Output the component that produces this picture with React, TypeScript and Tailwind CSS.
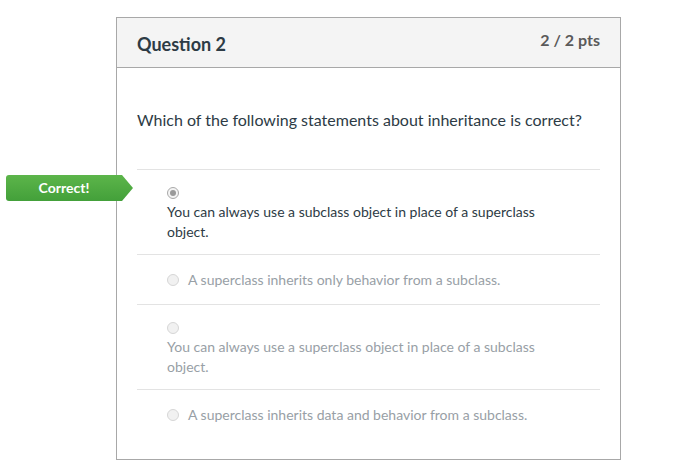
const options = [
  { text: "You can always use a subclass object in place of a superclass object.", stacked: true, selected: true },
  { text: "A superclass inherits only behavior from a subclass.", stacked: false, selected: false },
  { text: "You can always use a superclass object in place of a subclass object.", stacked: true, selected: false },
  { text: "A superclass inherits data and behavior from a subclass.", stacked: false, selected: false },
]

const Radio = ({ selected }: { selected: boolean }) => (
  <span
    className={
      selected
        ? "inline-flex h-[12px] w-[12px] shrink-0 items-center justify-center rounded-full border border-[#a9a9a9] bg-[#f4f4f4]"
        : "inline-block h-[12px] w-[12px] shrink-0 rounded-full border border-[#d6d6d6] bg-[#f1f1f1]"
    }
  >
    {selected && <span className="h-[6px] w-[6px] rounded-full bg-[#9a9a9a]" />}
  </span>
)

export default function App() {
  return (
    <div className="min-h-[474px] bg-white pl-[116px] pt-[17px] font-['Lato','Open_Sans',sans-serif]">
      <div className="w-[505px] border border-[#a8a8a8] bg-white">
        <div className="flex h-[50px] items-start justify-between border-b border-[#a8a8a8] bg-[#f4f4f4] px-[20px]">
          <h2 className="pt-[13px] text-[18px] font-bold leading-[26px] text-[#2d3b45]">Question 2</h2>
          <span className="pt-[10px] text-[16px] font-bold leading-[24px] text-[#5a5a5a]">2 / 2 pts</span>
        </div>
        <div className="px-[20px] pb-[20px]">
          <p className="pt-[40px] pb-[37px] text-[16px] leading-[24px] text-[#2d3b45]">
            Which of the following statements about inheritance is correct?
          </p>
          <div>
            {options.map((o, i) => (
              <div key={i} className="relative border-t border-[#e3e3e3] py-[12px] pl-[30px] pr-[60px] text-[14px] leading-[20px]">
                {o.selected && (
                  <div className="absolute left-[-131px] top-[5px] flex h-[26px] w-[127px] items-center justify-center rounded-l-[3px] bg-gradient-to-b from-[#5cb54a] to-[#43a03a] pr-[11px] text-[14px] font-bold text-white [clip-path:polygon(0_0,calc(100%-11px)_0,100%_50%,calc(100%-11px)_100%,0_100%)]">
                    Correct!
                  </div>
                )}
                {o.stacked ? (
                  <div>
                    <div className="flex h-[20px] items-center pt-[1px]">
                      <Radio selected={o.selected} />
                    </div>
                    <div className={o.selected ? "text-[#2d3b45]" : "text-[#98a0a6]"}>{o.text}</div>
                  </div>
                ) : (
                  <div className="flex items-center gap-[9px] pt-[3px] pb-[2px]">
                    <Radio selected={o.selected} />
                    <span className={o.selected ? "text-[#2d3b45]" : "text-[#98a0a6]"}>{o.text}</span>
                  </div>
                )}
              </div>
            ))}
          </div>
        </div>
      </div>
    </div>
  )
}
